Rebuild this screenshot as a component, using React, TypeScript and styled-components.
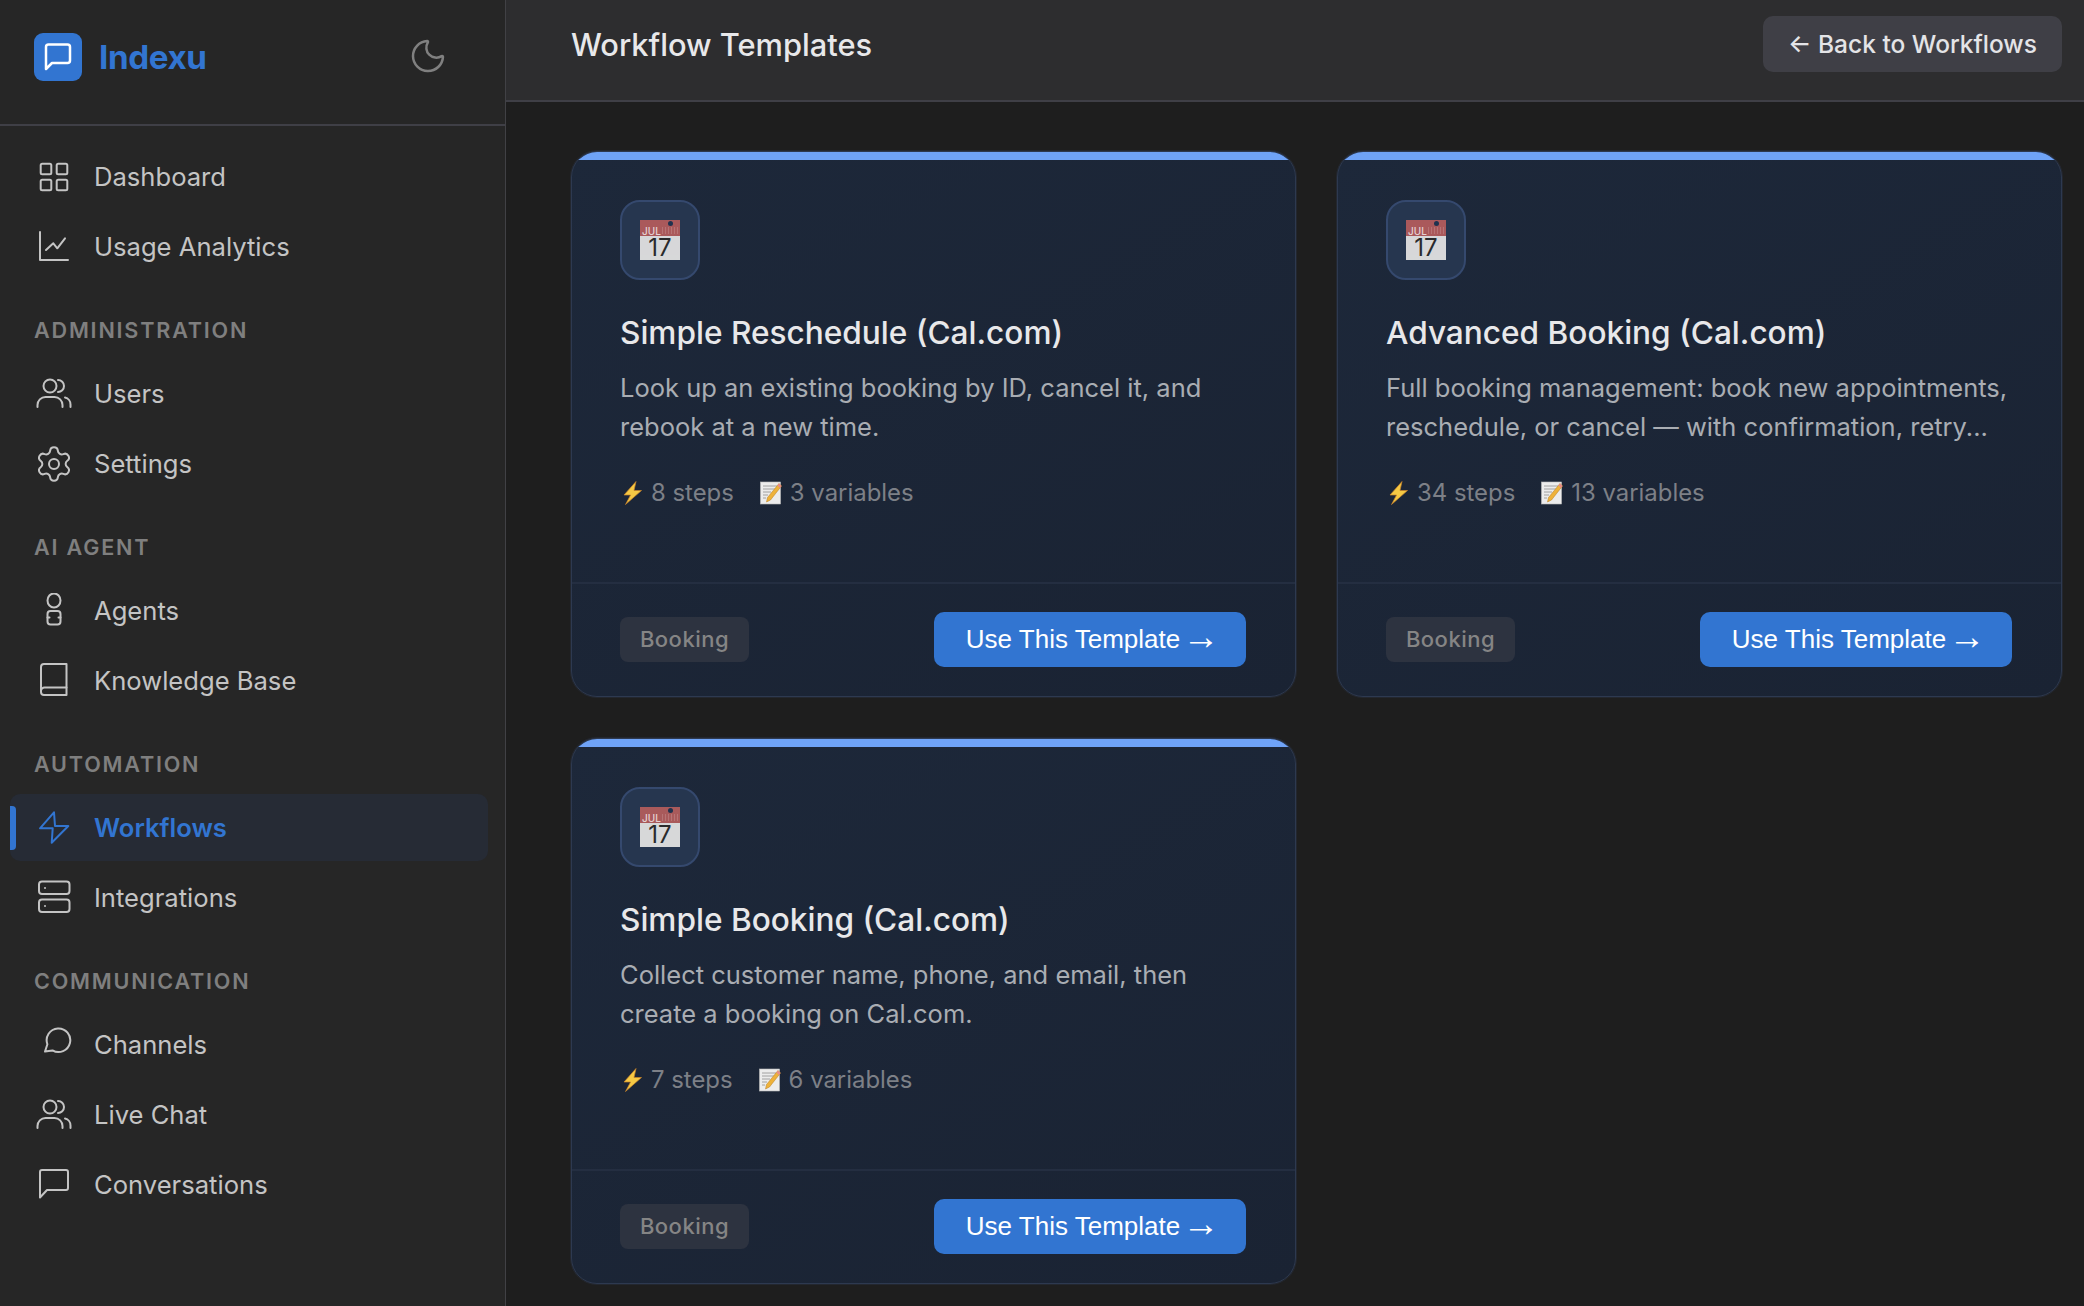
import React from "react";
import styled, { createGlobalStyle } from "styled-components";
import { Moon, Settings } from "lucide-react";

const Global = createGlobalStyle`
  html, body { margin: 0; padding: 0; height: 100%; background: #1e1e1e; overflow: hidden; }
  * { box-sizing: border-box; }
  body { font-family: Inter, "Noto Sans", sans-serif; -webkit-font-smoothing: antialiased; }
`;

const Shell = styled.div`
  display: grid;
  grid-template-columns: 506px 1fr;
  height: 1306px;
`;
const Sidebar = styled.aside`
  background: #262626;
  border-right: 1px solid #414145;
  display: flex;
  flex-direction: column;
`;
const Brand = styled.div`
  height: 126px;
  border-bottom: 2px solid #3f3f46;
  padding: 0 57px 10px 34px;
  display: flex;
  align-items: center;
  justify-content: space-between;
`;
const BrandLeft = styled.div`
  display: flex;
  align-items: center;
  gap: 17px;
`;
const LogoMark = styled.div`
  width: 48px;
  height: 48px;
  border-radius: 9px;
  background: #3275d1;
  display: flex;
  align-items: center;
  justify-content: center;
`;
const BrandName = styled.span`
  font-size: 33.2px;
  font-weight: 700;
  color: #3275d1;
  letter-spacing: -0.4px;
`;
const ThemeToggle = styled.div`
  display: flex;
  color: #808080;
  margin-top: -2px;
`;
const Nav = styled.nav`
  padding: 17px 0 0;
  display: flex;
  flex-direction: column;
`;
const SectionLabel = styled.div`
  font-size: 21.6px;
  line-height: 26px;
  font-weight: 600;
  letter-spacing: 1.8px;
  color: #7f7f7f;
  padding-left: 34px;
  margin: 34px 0 17px;
`;
const Item = styled.a<{ $active?: boolean }>`
  position: relative;
  display: flex;
  align-items: center;
  gap: 22px;
  height: 67px;
  margin: 0 17px 3px 10px;
  padding-left: 26px;
  border-radius: 10px;
  font-size: 25.6px;
  font-weight: ${(p) => (p.$active ? 600 : 400)};
  color: ${(p) => (p.$active ? "#3275d1" : "#c4c4c4")};
  background: ${(p) => (p.$active ? "#262b35" : "transparent")};
  &::before {
    content: "";
    display: ${(p) => (p.$active ? "block" : "none")};
    position: absolute;
    left: 0;
    top: 12px;
    bottom: 11px;
    width: 6px;
    border-radius: 0 4px 4px 0;
    background: #3275d1;
  }
`;
const Glyph = styled.svg`
  width: 36px;
  height: 36px;
  flex: none;
  fill: none;
  stroke: currentColor;
  stroke-width: 2;
  stroke-linecap: round;
  stroke-linejoin: round;
`;

const Main = styled.main`
  display: flex;
  flex-direction: column;
  min-width: 0;
`;
const TopBar = styled.header`
  height: 102px;
  background: #2d2d2f;
  border-bottom: 2px solid #3f3f46;
  padding: 0 22px 12px 65px;
  display: flex;
  align-items: center;
  justify-content: space-between;
`;
const PageTitle = styled.h1`
  margin: 0;
  font-size: 30.8px;
  font-weight: 550;
  color: #e8e8ea;
`;
const BackButton = styled.button`
  width: 299px;
  height: 56px;
  border: 0;
  border-radius: 10px;
  background: #3f3f46;
  color: #e4e4e7;
  font-family: Inter, sans-serif;
  font-size: 24.5px;
  font-weight: 500;
  padding: 0;
`;
const Grid = styled.div`
  display: grid;
  grid-template-columns: 725px 725px;
  gap: 41px;
  padding: 49px 22px 0 65px;
`;
const Card = styled.article`
  height: 546px;
  border-radius: 26px;
  border: 1px solid #2d3950;
  box-shadow: 0 0 0 1px rgba(45, 57, 80, 0.35);
  background: linear-gradient(150deg, #1d283a, #1a2333);
  overflow: hidden;
  display: flex;
  flex-direction: column;
`;
const Accent = styled.div`
  height: 8px;
  flex: none;
  background: #6fa3f7;
`;
const CardBody = styled.div`
  flex: 1;
  padding: 40px 48px 0;
`;
const IconTile = styled.div`
  width: 80px;
  height: 80px;
  border-radius: 20px;
  background: #26364f;
  border: 2px solid #35496e;
  display: flex;
  align-items: center;
  justify-content: center;
`;
const Calendar = styled.div`
  position: relative;
  width: 40px;
  height: 40px;
  background: #e1e1e1;
  color: #2b2b2b;
  display: flex;
  flex-direction: column;
  opacity: 0.95;
  &::before,
  &::after {
    content: "";
    position: absolute;
    top: 1px;
    width: 5px;
    height: 5px;
    border-radius: 50%;
    background: #1f3350;
  }
  &::before {
    left: 7px;
  }
  &::after {
    right: 7px;
  }
`;
const CalendarMonth = styled.div`
  position: relative;
  height: 16px;
  flex: none;
  background: #b15c5c;
  color: #f0dada;
  font-size: 10px;
  font-weight: 500;
  line-height: 10px;
  padding: 6px 0 0 2px;
  &::after {
    content: "";
    position: absolute;
    right: 2px;
    top: 7px;
    width: 16px;
    height: 7px;
    background: repeating-linear-gradient(90deg, rgba(240, 218, 218, 0.22) 0 1px, transparent 1px 3px);
  }
`;
const CalendarDay = styled.div`
  flex: 1;
  font-size: 24px;
  line-height: 24px;
  text-align: center;
`;
const CardTitle = styled.h3`
  margin: 32px 0 0;
  font-size: 31.6px;
  line-height: 42px;
  font-weight: 550;
  color: #e8e8ea;
`;
const CardDesc = styled.p`
  margin: 14px 0 0;
  font-size: 25.5px;
  line-height: 39px;
  color: #a9adb3;
  white-space: nowrap;
`;
const Meta = styled.div`
  margin-top: 31px;
  display: flex;
  align-items: center;
  gap: 26px;
  font-size: 23.9px;
  line-height: 32px;
  color: #7d8087;
`;
const MetaItem = styled.span`
  display: inline-flex;
  align-items: center;
  gap: 8px;
`;
const Footer = styled.div`
  height: 114px;
  flex: none;
  border-top: 2px solid #242e41;
  padding: 0 49px 2px 48px;
  display: flex;
  align-items: center;
  justify-content: space-between;
`;
const Tag = styled.span`
  width: 129px;
  height: 45px;
  border-radius: 8px;
  background: #2d3340;
  color: #858585;
  font-size: 22px;
  font-weight: 500;
  display: flex;
  align-items: center;
  justify-content: center;
  letter-spacing: 0.5px;
`;
const UseButton = styled.button`
  display: flex;
  align-items: center;
  justify-content: center;
  gap: 2px;
  width: 312px;
  height: 55px;
  border: 0;
  border-radius: 10px;
  background: #3275d1;
  color: #fff;
  font-family: "Liberation Sans", Arial, sans-serif;
  font-size: 26px;
  padding: 0 0 0 5px;
`;
const ButtonArrow = styled.span`
  font-size: 37px;
  line-height: 37px;
  margin-bottom: 5px;
`;
const EmojiSvg = styled.svg`
  flex: none;
  display: block;
`;

const BoltEmoji = () => (
  <EmojiSvg width="23" height="24" viewBox="-3 0 23 24">
    <path d="M13 0.5 L1 14 H7.6 L2.5 23.5 L18.5 9.5 H11 Z" fill="#f6c944" stroke="#c9822a" strokeWidth="0.7" strokeLinejoin="round" />
  </EmojiSvg>
);
const MemoEmoji = () => (
  <EmojiSvg width="22" height="24" viewBox="0 0 22 24">
    <rect x="0.5" y="1" width="20" height="22" fill="#ececec" stroke="#bdbdbd" strokeWidth="0.6" />
    <path d="M3 5H17M3 8H17M3 11H11M3 14H8M3 17H6" stroke="#9a9a9a" strokeWidth="0.9" />
    <path d="M19 2.5 L21.5 5 L10.5 19 L6.5 21 L7.5 16.5 Z" fill="#eeb23a" stroke="#b77d22" strokeWidth="0.5" />
    <path d="M19 2.5 L21.5 5 L20 7 L17.5 4.5 Z" fill="#e78b8b" />
  </EmojiSvg>
);

const UsersGlyph = () => (
  <Glyph viewBox="0 0 36 36">
    <circle cx="14" cy="10" r="6.5" />
    <path d="M22 4a6 6 0 0 1 0 12" />
    <path d="M1.5 31v-2a8 8 0 0 1 8-8h9a8 8 0 0 1 8 8v2" />
    <path d="M29 21.5a7 7 0 0 1 5.5 7V31" />
  </Glyph>
);

type NavEntry = { label: string; icon: React.ReactNode; active?: boolean };
type NavGroup = { title?: string; items: NavEntry[] };

const groups: NavGroup[] = [
  {
    items: [
      {
        label: "Dashboard",
        icon: (
          <Glyph viewBox="0 0 36 36">
            <rect x="4.7" y="4.7" width="10.6" height="10.6" rx="1.5" />
            <rect x="20.7" y="4.7" width="10.6" height="10.6" rx="1.5" />
            <rect x="4.7" y="20.7" width="10.6" height="10.6" rx="1.5" />
            <rect x="20.7" y="20.7" width="10.6" height="10.6" rx="1.5" />
          </Glyph>
        ),
      },
      {
        label: "Usage Analytics",
        icon: (
          <Glyph viewBox="0 0 36 36">
            <path d="M4 3v28h28" />
            <path d="M10 21l7.3-6.7 4 5L29 9.3" />
          </Glyph>
        ),
      },
    ],
  },
  {
    title: "ADMINISTRATION",
    items: [
      { label: "Users", icon: <UsersGlyph /> },
      { label: "Settings", icon: <Settings size={36} viewBox="1.2 1.2 21.6 21.6" strokeWidth={1.2} style={{ flex: "none" }} /> },
    ],
  },
  {
    title: "AI AGENT",
    items: [
      {
        label: "Agents",
        icon: (
          <Glyph viewBox="0 0 36 36">
            <ellipse cx="18" cy="7.5" rx="6.5" ry="7" />
            <rect x="11.5" y="18" width="13" height="13.5" rx="3" />
            <path d="M11.5 24.5h2M22.5 24.5h2" />
          </Glyph>
        ),
      },
      {
        label: "Knowledge Base",
        icon: (
          <Glyph viewBox="0 0 36 36">
            <path d="M5 29V4a3 3 0 0 1 3-3h22.5v31H8a3 3 0 0 1-3-3z" />
            <path d="M5 28a3.5 3.5 0 0 1 3.5-3.5h22" />
          </Glyph>
        ),
      },
    ],
  },
  {
    title: "AUTOMATION",
    items: [
      {
        label: "Workflows",
        active: true,
        icon: (
          <Glyph viewBox="0 0 36 36">
            <path d="M18 2.3 4 18.3h12.7l-1 14.4L32.3 16H19z" />
          </Glyph>
        ),
      },
      {
        label: "Integrations",
        icon: (
          <Glyph viewBox="0 0 36 36">
            <rect x="3" y="1.5" width="30.5" height="12.5" rx="3" />
            <rect x="3" y="19.5" width="30.5" height="12.5" rx="3" />
            <path d="M9 8h.01M9 26h.01" />
          </Glyph>
        ),
      },
    ],
  },
  {
    title: "COMMUNICATION",
    items: [
      {
        label: "Channels",
        icon: (
          <Glyph viewBox="0 0 36 36">
            <path d="M9 24.5l2.4-7.2A11.8 11.8 0 1 1 16.5 23.4z" />
          </Glyph>
        ),
      },
      { label: "Live Chat", icon: <UsersGlyph /> },
      {
        label: "Conversations",
        icon: (
          <Glyph viewBox="0 0 36 36">
            <path d="M4 30.5V5a2 2 0 0 1 2-2h24a2 2 0 0 1 2 2v16a2 2 0 0 1-2 2H11z" />
          </Glyph>
        ),
      },
    ],
  },
];

const templates = [
  {
    title: "Simple Reschedule (Cal.com)",
    desc: ["Look up an existing booking by ID, cancel it, and", "rebook at a new time."],
    steps: "8 steps",
    vars: "3 variables",
  },
  {
    title: "Advanced Booking (Cal.com)",
    desc: ["Full booking management: book new appointments,", "reschedule, or cancel — with confirmation, retry..."],
    steps: "34 steps",
    vars: "13 variables",
  },
  {
    title: "Simple Booking (Cal.com)",
    desc: ["Collect customer name, phone, and email, then", "create a booking on Cal.com."],
    steps: "7 steps",
    vars: "6 variables",
  },
];

export default function App() {
  return (
    <>
      <Global />
      <Shell>
        <Sidebar>
          <Brand>
            <BrandLeft>
              <LogoMark>
                <svg width="48" height="48" viewBox="0 0 48 48" fill="none" stroke="#fff" strokeWidth="2.5" strokeLinejoin="round">
                  <path d="M12 36V14a2.5 2.5 0 0 1 2.5-2.5h19A2.5 2.5 0 0 1 36 14v13.5a2.5 2.5 0 0 1-2.5 2.5H18z" />
                </svg>
              </LogoMark>
              <BrandName>Indexu</BrandName>
            </BrandLeft>
            <ThemeToggle>
              <Moon size={40} strokeWidth={1.5} />
            </ThemeToggle>
          </Brand>
          <Nav>
            {groups.map((g, i) => (
              <React.Fragment key={i}>
                {g.title && <SectionLabel>{g.title}</SectionLabel>}
                {g.items.map((it) => (
                  <Item key={it.label} $active={it.active}>
                    {it.icon}
                    {it.label}
                  </Item>
                ))}
              </React.Fragment>
            ))}
          </Nav>
        </Sidebar>
        <Main>
          <TopBar>
            <PageTitle>Workflow Templates</PageTitle>
            <BackButton>← Back to Workflows</BackButton>
          </TopBar>
          <Grid>
            {templates.map((t) => (
              <Card key={t.title}>
                <Accent />
                <CardBody>
                  <IconTile>
                    <Calendar>
                      <CalendarMonth>JUL</CalendarMonth>
                      <CalendarDay>17</CalendarDay>
                    </Calendar>
                  </IconTile>
                  <CardTitle>{t.title}</CardTitle>
                  <CardDesc>
                    {t.desc[0]}
                    <br />
                    {t.desc[1]}
                  </CardDesc>
                  <Meta>
                    <MetaItem>
                      <BoltEmoji />
                      {t.steps}
                    </MetaItem>
                    <MetaItem>
                      <MemoEmoji />
                      {t.vars}
                    </MetaItem>
                  </Meta>
                </CardBody>
                <Footer>
                  <Tag>Booking</Tag>
                  <UseButton>
                    <span>Use This Template</span>
                    <ButtonArrow>→</ButtonArrow>
                  </UseButton>
                </Footer>
              </Card>
            ))}
          </Grid>
        </Main>
      </Shell>
    </>
  );
}
